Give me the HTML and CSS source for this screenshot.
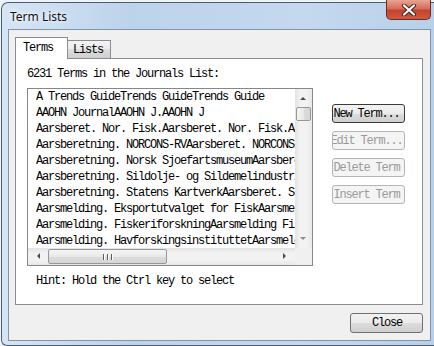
FILE: index.html
```html
<!DOCTYPE html>
<html lang="en">
<head>
  <meta charset="UTF-8" />
  <title>Term Lists</title>
  <link rel="stylesheet" href="styles.css">
</head>
<body>
  <div class="window">
    <div class="titlebar">
      <span class="title">Term Lists</span>
      <div class="close-x">
        <svg width="16" height="12" viewBox="0 0 16 12">
          <path d="M3 1.5 L13 10.5 M13 1.5 L3 10.5" stroke="#4a2420" stroke-width="4.2" stroke-linecap="round"/>
          <path d="M3 1.5 L13 10.5 M13 1.5 L3 10.5" stroke="#ffffff" stroke-width="2.2" stroke-linecap="round"/>
        </svg>
      </div>
    </div>

    <div class="client">
      <div class="tabs">
        <div class="tab active">Terms</div>
        <div class="tab">Lists</div>
      </div>

      <div class="panel">
        <div class="left">
          <div class="count">6231 Terms in the Journals List:</div>
          <div class="listbox">
            <div class="rows">
              <div class="row">A Trends GuideTrends GuideTrends Guide</div>
              <div class="row">AAOHN JournalAAOHN J.AAOHN J</div>
              <div class="row">Aarsberet. Nor. Fisk.Aarsberet. Nor. Fisk.Aarsberet</div>
              <div class="row">Aarsberetning. NORCONS-RVAarsberet. NORCONS-RV</div>
              <div class="row">Aarsberetning. Norsk SjoefartsmuseumAarsberet. Nor</div>
              <div class="row">Aarsberetning. Sildolje- og Sildemelindustriens</div>
              <div class="row">Aarsberetning. Statens KartverkAarsberet. Stat</div>
              <div class="row">Aarsmelding. Eksportutvalget for FiskAarsmeld.</div>
              <div class="row">Aarsmelding. FiskeriforskningAarsmelding Fisk</div>
              <div class="row">Aarsmelding. HavforskingsinstituttetAarsmelding</div>
            </div>
            <div class="vscroll">
              <span class="arrow up"></span>
              <span class="vthumb"></span>
              <span class="arrow down"></span>
            </div>
            <div class="hscroll">
              <span class="arrow left"></span>
              <span class="hthumb"><i></i><i></i><i></i></span>
              <span class="arrow right"></span>
            </div>
            <div class="corner"></div>
          </div>
          <div class="hint">Hint: Hold the Ctrl key to select</div>
        </div>

        <div class="actions">
          <div class="btn default" role="button"><span>New Term...</span></div>
          <div class="btn disabled" role="button" aria-disabled="true"><span>Edit Term...</span></div>
          <div class="btn disabled" role="button" aria-disabled="true"><span>Delete Term</span></div>
          <div class="btn disabled" role="button" aria-disabled="true"><span>Insert Term</span></div>
        </div>
      </div>

      <div class="footer">
        <div class="btn close" role="button"><span>Close</span></div>
      </div>
    </div>
  </div>
</body>
</html>
```

FILE: styles.css
```css
body {
  margin: 0;
  width: 434px;
  height: 346px;
  overflow: hidden;
  background: #eef3f8;
  font-family: "Liberation Mono", monospace;
  font-size: 12px;
  letter-spacing: -1.2px;
  color: #000;
}

.window {
  box-sizing: border-box;
  height: 344px;
  margin: 2px 0 0 1px;
  padding: 0 3px 4px 6px;
  border: 1px solid #4e5c6c;
  border-right: none;
  border-radius: 7px 0 0 6px;
  background: linear-gradient(to right, #d6e5f5, #bcd3ec 30%, #c4d9f0 70%, #b8d0ea);
  display: flex;
  flex-direction: column;
}

.titlebar {
  height: 26px;
  display: flex;
  align-items: flex-start;
}

.title {
  font-family: "Noto Sans", sans-serif;
  font-size: 12px;
  letter-spacing: 0;
  color: #111;
  margin: 5px 0 0 2px;
  text-shadow: 0 0 6px #fff, 0 0 3px #fff;
}

.close-x {
  margin: -3px 0 0 auto;
  width: 45px;
  height: 20px;
  box-sizing: border-box;
  border: 1px solid #6b2a22;
  border-top: none;
  border-radius: 0 0 5px 5px;
  background: linear-gradient(#e8a493, #d66d5a 45%, #c4432e 55%, #d0593f);
  display: flex;
  align-items: center;
  justify-content: center;
}

.client {
  flex: 1;
  box-sizing: border-box;
  border: 1px solid #8493a6;
  background: #f0f0f0;
  padding: 7px 7px 0 6px;
}

.tabs {
  height: 21px;
  display: flex;
  align-items: flex-end;
}

.tab {
  box-sizing: border-box;
  height: 18px;
  width: 44px;
  margin-left: -1px;
  border: 1px solid #898c95;
  border-bottom: none;
  background: linear-gradient(#f3f3f3, #ebebeb 50%, #dddddd 50%, #cfcfcf);
  padding: 3px 0 0 5px;
  line-height: 12px;
}

.tab.active {
  width: 53px;
  height: 22px;
  margin: 0 0 -1px 0;
  padding: 4px 0 0 7px;
  background: #fff;
  position: relative;
  z-index: 1;
}

.panel {
  box-sizing: border-box;
  height: 247px;
  border: 1px solid #898c95;
  background: #fff;
  padding: 7px 0 0 11px;
  display: flex;
}

.count {
  height: 16px;
  line-height: 16px;
  margin-bottom: 6px;
}

.listbox {
  box-sizing: border-box;
  width: 286px;
  height: 178px;
  border: 1px solid #828790;
  display: grid;
  grid-template-columns: 267px 17px;
  grid-template-rows: 159px 17px;
}

.rows {
  overflow: hidden;
  padding-left: 8px;
}

.row {
  height: 16px;
  line-height: 16px;
  white-space: nowrap;
}

.vscroll {
  position: relative;
  background: linear-gradient(to right, #e3e3e3, #f2f2f2 30%, #f2f2f2 70%, #e8e8e8);
}

.hscroll {
  position: relative;
  background: linear-gradient(#e3e3e3, #f2f2f2 30%, #f2f2f2 70%, #e8e8e8);
}

.corner {
  background: #f0f0f0;
}

.arrow {
  position: absolute;
  width: 0;
  height: 0;
  border: 3px solid transparent;
}

.arrow.up {
  left: 5px;
  top: 5px;
  border-bottom: 3px solid #4c4c4c;
}

.arrow.down {
  left: 5px;
  bottom: 5px;
  border-top: 3px solid #8a8a8a;
}

.arrow.left {
  left: 6px;
  top: 5px;
  border-right: 3px solid #4c4c4c;
}

.arrow.right {
  right: 6px;
  top: 5px;
  border-left: 3px solid #4c4c4c;
}

.vthumb {
  position: absolute;
  left: 1px;
  top: 18px;
  width: 15px;
  height: 14px;
  box-sizing: border-box;
  border: 1px solid #979797;
  border-radius: 2px;
  background: linear-gradient(to right, #f5f5f5, #e9e9e9 50%, #dcdcdc 50%, #d6d6d6);
}

.hthumb {
  position: absolute;
  left: 20px;
  top: 1px;
  width: 119px;
  height: 15px;
  box-sizing: border-box;
  border: 1px solid #979797;
  border-radius: 2px;
  background: linear-gradient(#f5f5f5, #e9e9e9 50%, #dcdcdc 50%, #d6d6d6);
  display: flex;
  justify-content: center;
  align-items: center;
  gap: 2px;
}

.hthumb i {
  width: 1px;
  height: 6px;
  background: #5e5e5e;
  border-right: 1px solid #fff;
}

.hint {
  height: 16px;
  line-height: 16px;
  margin-top: 7px;
  padding-left: 9px;
}

.actions {
  display: flex;
  flex-direction: column;
  gap: 8px;
  margin-left: 19px;
  padding-top: 38px;
}

.btn {
  box-sizing: border-box;
  width: 73px;
  height: 19px;
  border: 1px solid #707070;
  border-radius: 3px;
  background: linear-gradient(#f2f2f2, #ebebeb 50%, #dddddd 50%, #cfcfcf);
  overflow: hidden;
  display: flex;
  justify-content: center;
  align-items: center;
  cursor: default;
}

.btn span {
  flex: none;
  white-space: nowrap;
  margin-right: -1.2px;
}

.actions .btn span {
  margin-right: 4px;
}

.btn.default {
  border-color: #3a3a3a;
}

.btn.disabled {
  border-color: #b5b5b5;
  background: #f4f4f4;
  color: #9a9a9a;
}

.footer {
  display: flex;
  justify-content: flex-end;
  margin-top: 8px;
}

.btn.close {
  height: 20px;
}
```
